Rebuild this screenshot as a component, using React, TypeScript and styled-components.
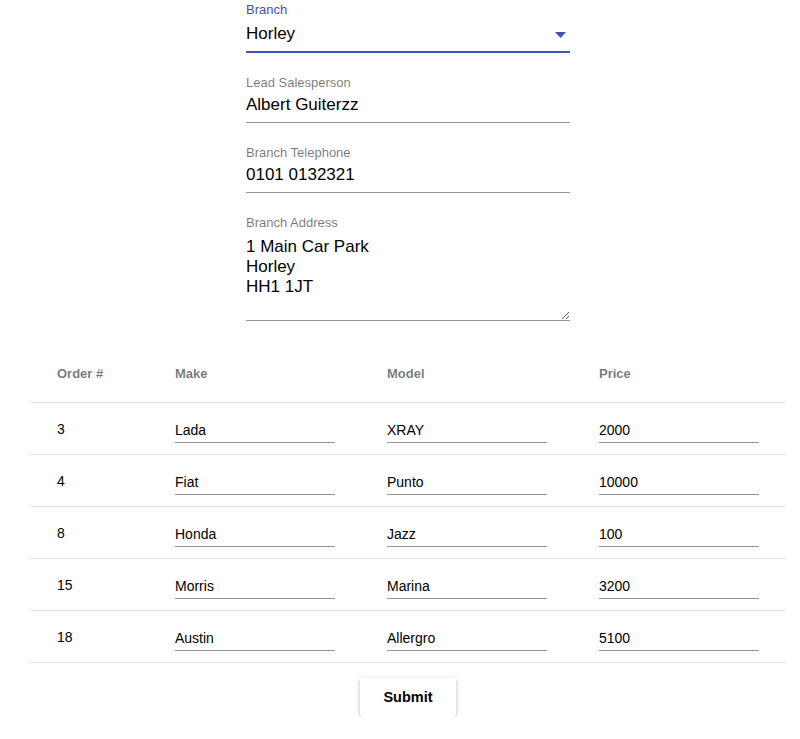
import React from "react";
import styled, { createGlobalStyle } from "styled-components";

const GlobalStyle = createGlobalStyle`
  html, body {
    margin: 0;
    padding: 0;
    background: #ffffff;
    font-family: "Liberation Sans", Arial, Helvetica, sans-serif;
    color: rgba(0, 0, 0, 0.87);
  }
  * { box-sizing: border-box; }
`;

const Page = styled.div`
  width: 800px;
  padding: 2px 14px 0 30px;
  display: flex;
  flex-direction: column;
  align-items: center;
`;

const Form = styled.form`
  width: 324px;
  display: flex;
  flex-direction: column;
  gap: 22px;
`;

const Field = styled.div`
  display: flex;
  flex-direction: column;
`;

const Label = styled.label<{ $focused?: boolean }>`
  font-size: 13px;
  line-height: 16px;
  height: 16px;
  color: ${(p) => (p.$focused ? "#3f51b5" : "rgba(0,0,0,0.54)")};
`;

const ValueRow = styled.div<{ $focused?: boolean }>`
  margin-top: ${(p) => (p.$focused ? 4 : 2)}px;
  display: flex;
  align-items: center;
  justify-content: space-between;
  height: ${(p) => (p.$focused ? 31 : 30)}px;
  padding-bottom: 5px;
  border-bottom: ${(p) =>
    p.$focused ? "2px solid #3f51b5" : "1px solid rgba(0,0,0,0.42)"};
`;

const ValueText = styled.span`
  font-size: 17px;
  line-height: 24px;
  height: 24px;
  color: #000;
`;

const Arrow = styled.svg`
  width: 11px;
  height: 6px;
  margin-right: 4px;
  margin-top: 1px;
  flex: none;
`;

const TextArea = styled.textarea`
  margin-top: 6px;
  width: 100%;
  height: 84px;
  padding: 0 0 3px 0;
  border: none;
  border-bottom: 1px solid rgba(0, 0, 0, 0.42);
  font-family: "Liberation Sans", Arial, Helvetica, sans-serif;
  font-size: 17px;
  line-height: 20px;
  color: #000;
  resize: vertical;
  outline: none;
  background: transparent;
`;

const Table = styled.div`
  width: 756px;
  margin-top: 25px;
  display: flex;
  flex-direction: column;
`;

const Row = styled.div<{ $head?: boolean }>`
  display: grid;
  grid-template-columns: 118px 212px 212px 1fr;
  height: ${(p) => (p.$head ? 57 : 52)}px;
  border-bottom: 1px solid #e0e0e0;
`;

const HeadCell = styled.div`
  display: flex;
  align-items: center;
  padding-left: 27px;
  padding-bottom: 2px;
  font-size: 13px;
  font-weight: 700;
  color: rgba(0, 0, 0, 0.54);
`;

const Cell = styled.div`
  display: flex;
  align-items: center;
  padding-left: 27px;
  font-size: 14px;
  color: #000;
`;

const CellInput = styled.input`
  margin-top: 6px;
  width: 160px;
  height: 23px;
  padding: 0 0 3px 0;
  border: none;
  border-bottom: 1px solid rgba(0, 0, 0, 0.42);
  font-family: "Liberation Sans", Arial, Helvetica, sans-serif;
  font-size: 14px;
  line-height: 18px;
  color: #000;
  background: transparent;
  outline: none;
`;

const Actions = styled.div`
  width: 756px;
  display: flex;
  justify-content: center;
  margin-top: 15px;
`;

const Button = styled.button`
  height: 38px;
  padding: 0 23px;
  border: none;
  border-radius: 2px;
  background: #ffffff;
  font-family: "Liberation Sans", Arial, Helvetica, sans-serif;
  font-size: 14.5px;
  font-weight: 700;
  color: #000;
  box-shadow: 0px 3px 1px -2px rgba(0, 0, 0, 0.25),
    0px 2px 3px 0px rgba(0, 0, 0, 0.2), 0px 1px 6px 0px rgba(0, 0, 0, 0.14);
  cursor: pointer;
`;

const orders = [
  { id: 3, make: "Lada", model: "XRAY", price: "2000" },
  { id: 4, make: "Fiat", model: "Punto", price: "10000" },
  { id: 8, make: "Honda", model: "Jazz", price: "100" },
  { id: 15, make: "Morris", model: "Marina", price: "3200" },
  { id: 18, make: "Austin", model: "Allergro", price: "5100" },
];

export default function App() {
  return (
    <>
      <GlobalStyle />
      <Page>
        <Form onSubmit={(e) => e.preventDefault()}>
          <Field>
            <Label $focused>Branch</Label>
            <ValueRow $focused>
              <ValueText>Horley</ValueText>
              <Arrow viewBox="0 0 11 6">
                <path d="M0 0 L11 0 L5.5 6 Z" fill="#3f51b5" />
              </Arrow>
            </ValueRow>
          </Field>
          <Field>
            <Label>Lead Salesperson</Label>
            <ValueRow>
              <ValueText>Albert Guiterzz</ValueText>
            </ValueRow>
          </Field>
          <Field>
            <Label>Branch Telephone</Label>
            <ValueRow>
              <ValueText>0101 0132321</ValueText>
            </ValueRow>
          </Field>
          <Field>
            <Label>Branch Address</Label>
            <TextArea
              rows={4}
              defaultValue={"1 Main Car Park\nHorley\nHH1 1JT"}
            />
          </Field>
        </Form>

        <Table>
          <Row $head>
            <HeadCell>Order #</HeadCell>
            <HeadCell>Make</HeadCell>
            <HeadCell>Model</HeadCell>
            <HeadCell>Price</HeadCell>
          </Row>
          {orders.map((o) => (
            <Row key={o.id}>
              <Cell>{o.id}</Cell>
              <Cell>
                <CellInput defaultValue={o.make} />
              </Cell>
              <Cell>
                <CellInput defaultValue={o.model} />
              </Cell>
              <Cell>
                <CellInput defaultValue={o.price} />
              </Cell>
            </Row>
          ))}
        </Table>

        <Actions>
          <Button type="button">Submit</Button>
        </Actions>
      </Page>
    </>
  );
}
